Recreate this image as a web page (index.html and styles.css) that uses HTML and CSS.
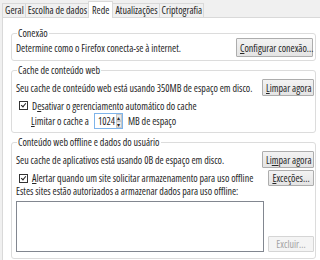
FILE: index.html
```html
<!DOCTYPE html>
<html lang="pt">
<head>
    <meta charset="UTF-8">
    <title>Rede</title>
    <link rel="stylesheet" href="styles.css">
</head>
<body>
    <div class="tabs">
        <div class="tab">Geral</div>
        <div class="tab">Escolha de dados</div>
        <div class="tab active">Rede</div>
        <div class="tab">Atualizações</div>
        <div class="tab">Criptografia</div>
    </div>
    <div class="panel">
        <fieldset class="group">
            <legend>Conexão</legend>
            <div class="row first">
                <span>Determine como o Firefox conecta-se à internet.</span>
                <button class="btn wide"><u>C</u>onfigurar conexão...</button>
            </div>
        </fieldset>

        <fieldset class="group">
            <legend>Cache de conteúdo web</legend>
            <div class="row">
                <span>Seu cache de conteúdo web está usando 350MB de espaço em disco.</span>
                <button class="btn"><u>L</u>impar agora</button>
            </div>
            <div class="check-row">
                <span class="box checked"></span>
                <span>D<u>e</u>sativar o gerenciamento automático do cache</span>
            </div>
            <div class="limit">
                <span><u>L</u>imitar o cache a</span>
                <span class="spin">
                    <span class="spin-val">1024</span>
                    <span class="arrows"><i>▴</i><i>▾</i></span>
                </span>
                <span>MB de espaço</span>
            </div>
        </fieldset>

        <fieldset class="group">
            <legend>Conteúdo web offline e dados do usuário</legend>
            <div class="row">
                <span>Seu cache de aplicativos está usando 0B de espaço em disco.</span>
                <button class="btn">Li<u>m</u>par agora</button>
            </div>
            <div class="row second">
                <div class="check-row inline">
                    <span class="box checked"></span>
                    <span><u>A</u>lertar quando um site solicitar armazenamento para uso offline</span>
                </div>
                <button class="btn small"><u>E</u>xceções...</button>
            </div>
            <p class="note">Estes sites estão autorizados a armazenar dados para uso offline:</p>
            <div class="list-row">
                <div class="listbox"></div>
                <button class="btn small" disabled>Excluir...</button>
            </div>
        </fieldset>
    </div>
</body>
</html>
```

FILE: styles.css
```css
body {
    margin: 0;
    background: #f0f0f0;
    font-family: 'Open Sans', 'Noto Sans', sans-serif;
    font-stretch: 77%;
    font-size: 10px;
    color: #262626;
    width: 330px;
    height: 260px;
    overflow: hidden;
    white-space: nowrap;
}

u {
    text-decoration-thickness: 1px;
    text-underline-offset: 1px;
}

.tabs {
    display: flex;
    padding: 3px 0 0 2px;
    height: 14px;
    position: relative;
    z-index: 1;
}

.tab {
    border: 1px solid #d9d9d9;
    border-bottom: none;
    background: #f0f0f0;
    padding: 0 1px 0 2px;
    line-height: 13px;
    margin-right: -1px;
}

.tab.active {
    background: #fff;
    height: 16px;
    margin-top: -2px;
    line-height: 16px;
    padding: 0 3px;
}

.panel {
    background: #fff;
    border: 1px solid #d9d9d9;
    margin-left: 2px;
    padding: 10px 0 0 8px;
    height: 240px;
}

.group {
    border: 1px solid #dcdcdc;
    border-radius: 3px;
    margin: 0 0 4px 0;
    padding: 0 1px 3px 4px;
    width: 305px;
    box-sizing: border-box;
    min-width: 0;
}

.group legend {
    padding: 0 1px;
    margin-left: 1px;
    line-height: 10px;
    height: 10px;
}

.row {
    display: flex;
    justify-content: space-between;
    align-items: center;
    margin-top: 4px;
}

.row.first {
    margin-top: 0;
    height: 19px;
}

.btn {
    font: inherit;
    background: linear-gradient(#f3f3f3, #e4e4e4);
    border: 1px solid #adadad;
    border-radius: 1px;
    height: 17px;
    padding: 0 3px;
    color: #262626;
    width: 52px;
}

.btn.wide {
    width: 77px;
    height: 19px;
    margin-right: 1px;
}

.btn.small {
    width: 46px;
    height: 16px;
    padding: 0;
}

.btn:disabled {
    color: #a3a3a3;
    border-color: #d5d5d5;
    background: #f4f4f4;
}

.check-row {
    display: flex;
    align-items: center;
    gap: 4px;
    height: 15px;
    margin: 2px 0 0 3px;
}

.check-row.inline {
    margin: 0 0 0 3px;
}

.box {
    width: 7px;
    height: 7px;
    border: 1px solid #333;
    background: #fff;
    position: relative;
}

.box.checked::after {
    content: "";
    position: absolute;
    left: 2px;
    top: 0;
    width: 2px;
    height: 4px;
    border: solid #222;
    border-width: 0 1.5px 1.5px 0;
    transform: rotate(40deg);
}

.limit {
    display: flex;
    align-items: center;
    gap: 5px;
    height: 16px;
    margin: 0 0 0 15px;
}

.spin {
    display: flex;
    border: 1px solid #7eb4ea;
    height: 14px;
    width: 27px;
    background: #fff;
}

.spin-val {
    flex: 1;
    text-align: right;
    line-height: 14px;
    padding-right: 1px;
}

.arrows {
    display: flex;
    flex-direction: column;
    width: 6px;
}

.arrows i {
    flex: 1;
    font-style: normal;
    font-size: 6px;
    line-height: 6px;
    text-align: center;
    background: #eaeaea;
    border: 1px solid #c8c8c8;
    overflow: hidden;
}

.row.second {
    margin-top: 2px;
}

.note {
    margin: 0;
    line-height: 11px;
}

.list-row {
    display: flex;
    justify-content: space-between;
    align-items: flex-end;
    margin-top: 4px;
    padding-bottom: 3px;
}

.listbox {
    width: 246px;
    height: 49px;
    border: 1px solid #828790;
    background: #fff;
}
```
